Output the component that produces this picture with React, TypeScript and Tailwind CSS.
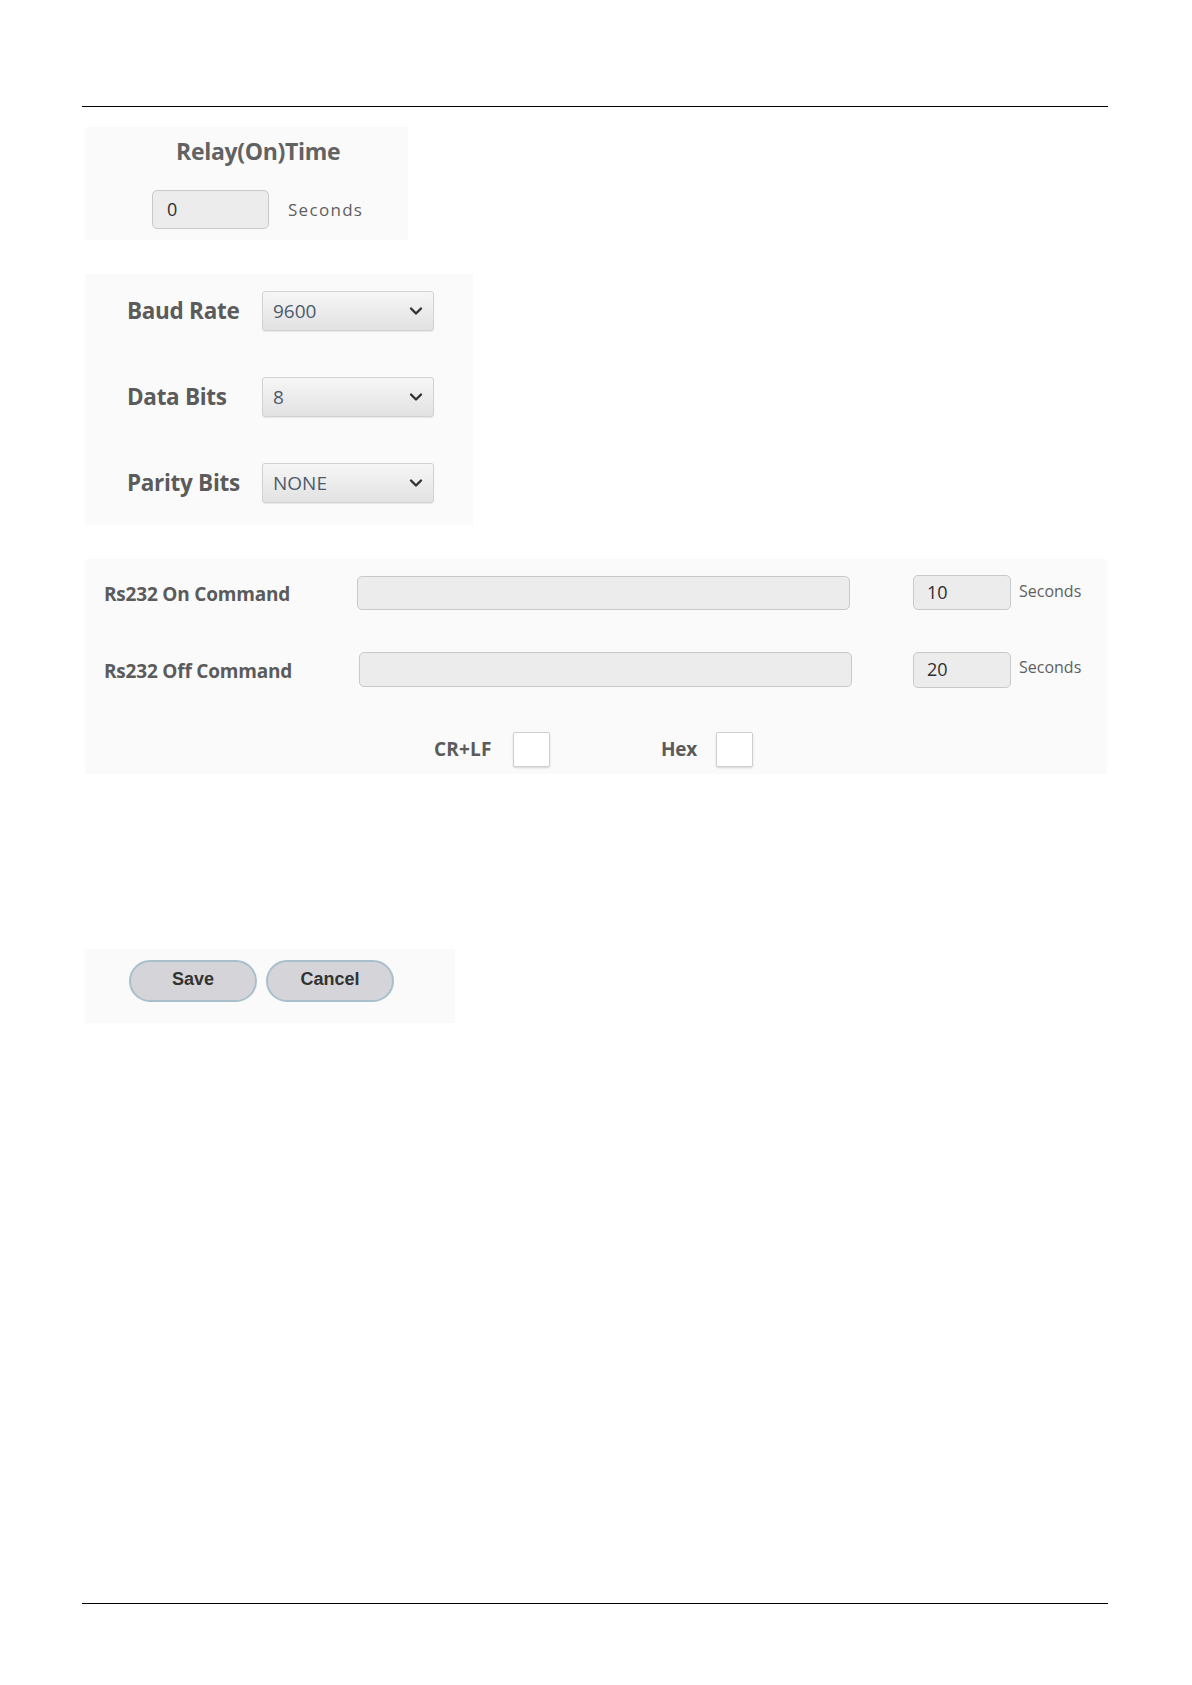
import React from "react";

const label = "font-['Open_Sans',sans-serif] font-bold text-[#5b5b5b]";

function Chevron() {
  return (
    <svg width="14" height="10" viewBox="0 0 14 10" className="shrink-0">
      <path d="M2 2.5 L7 7.5 L12 2.5" fill="none" stroke="#333" strokeWidth="2.4" strokeLinecap="round" strokeLinejoin="round" />
    </svg>
  );
}

function Select({ value }: { value: string }) {
  return (
    <div className="w-[172px] h-[40px] rounded-[3px] border border-[#d2d2d2] bg-gradient-to-b from-[#f6f6f6] to-[#e2e2e2] flex items-center justify-between pl-[10px] pr-[10px] shadow-[0_1px_1px_rgba(0,0,0,0.08)]">
      <span className="font-['Open_Sans',sans-serif] text-[19px] text-[#4d5a6b]">{value}</span>
      <Chevron />
    </div>
  );
}

function TextBox({ w, h, value, pl = 14 }: { w: string; h: string; value?: string; pl?: number }) {
  return (
    <div
      className={`${w} ${h} rounded-[5px] border-[1.5px] border-[#c9c9c9] bg-[#ececec] flex items-center font-['Open_Sans',sans-serif] text-[18px] text-[#2e2e2e]`}
      style={{ paddingLeft: pl }}
    >
      {value}
    </div>
  );
}

function Check() {
  return <div className="w-[37px] h-[35px] bg-white border border-[#cfcfcf] rounded-[2px] shadow-[0_1px_2px_rgba(0,0,0,0.15)]" />;
}

export default function App() {
  return (
    <div className="w-[1192px] h-[1685px] bg-white flex flex-col">
      <div className="mt-[106px] ml-[82px] w-[1026px] border-t border-black" />

      {/* Relay box */}
      <div className="mt-[20px] ml-[85px] w-[323px] h-[113px] bg-[#fafafa] flex flex-col pt-[9px]">
        <div className={`${label} text-[23px] leading-[30px] text-[#626262] tracking-[-0.3px] ml-[91px]`}>Relay(On)Time</div>
        <div className="flex items-center ml-[67px] mt-[24px]">
          <TextBox w="w-[117px]" h="h-[39px]" value="0" />
          <span className="ml-[19px] font-['Open_Sans',sans-serif] text-[17px] tracking-[1.3px] text-[#5f5f5f]">Seconds</span>
        </div>
      </div>

      {/* Serial box */}
      <div className="mt-[34px] ml-[85px] w-[388px] h-[251px] bg-[#fafafa] pl-[42px] pt-[17px] flex flex-col gap-[46px]">
        {[
          ["Baud Rate", "9600"],
          ["Data Bits", "8"],
          ["Parity Bits", "NONE"],
        ].map(([l, v]) => (
          <div key={l} className="flex items-center h-[40px]">
            <div className={`${label} w-[135px] text-[22.5px] tracking-[-0.3px]`}>{l}</div>
            <Select value={v} />
          </div>
        ))}
      </div>

      {/* Rs232 box */}
      <div className="mt-[34px] ml-[85px] w-[1022px] h-[215px] bg-[#fafafa] pl-[19px] pt-[15px] flex flex-col">
        <div className="flex items-center h-[37px]">
          <div className={`${label} w-[253px] text-[19px] tracking-[-0.2px] pt-[3px]`}>Rs232 On Command</div>
          <TextBox w="w-[493px]" h="h-[34px]" />
          <div className="ml-[63px]">
            <TextBox w="w-[98px]" h="h-[35px]" value="10" pl={13} />
          </div>
          <span className="ml-[8px] -mt-[3px] font-['Open_Sans',sans-serif] text-[16px] text-[#5f5f5f]">Seconds</span>
        </div>
        <div className="flex items-center h-[37px] mt-[40px]">
          <div className={`${label} w-[255px] text-[19px] tracking-[-0.2px] pt-[4px]`}>Rs232 Off Command</div>
          <TextBox w="w-[493px]" h="h-[35px]" />
          <div className="ml-[61px]">
            <TextBox w="w-[98px]" h="h-[36px]" value="20" pl={13} />
          </div>
          <span className="ml-[8px] -mt-[5px] font-['Open_Sans',sans-serif] text-[16px] text-[#5f5f5f]">Seconds</span>
        </div>
        <div className="flex items-center h-[35px] mt-[44px] pl-[330px]">
          <span className={`${label} w-[79px] text-[19px] tracking-[0.2px]`}>CR+LF</span>
          <Check />
          <span className={`${label} w-[55px] ml-[111px] text-[19px] tracking-[-0.2px]`}>Hex</span>
          <Check />
        </div>
      </div>

      {/* Buttons */}
      <div className="mt-[175px] ml-[85px] w-[370px] h-[74px] bg-[#fafafa] pl-[44px] pt-[11px] flex gap-[9px] items-start">
        {["Save", "Cancel"].map((t) => (
          <div
            key={t}
            className="w-[128px] h-[42px] rounded-full border-2 border-[#a9bfcb] bg-[#d5d5d9] flex items-center justify-center font-['Liberation_Sans',Arial,sans-serif] font-bold text-[18px] text-[#333] pb-[3px]"
          >
            {t}
          </div>
        ))}
      </div>

      <div className="mt-[580px] ml-[82px] w-[1026px] border-t border-black" />
    </div>
  );
}
